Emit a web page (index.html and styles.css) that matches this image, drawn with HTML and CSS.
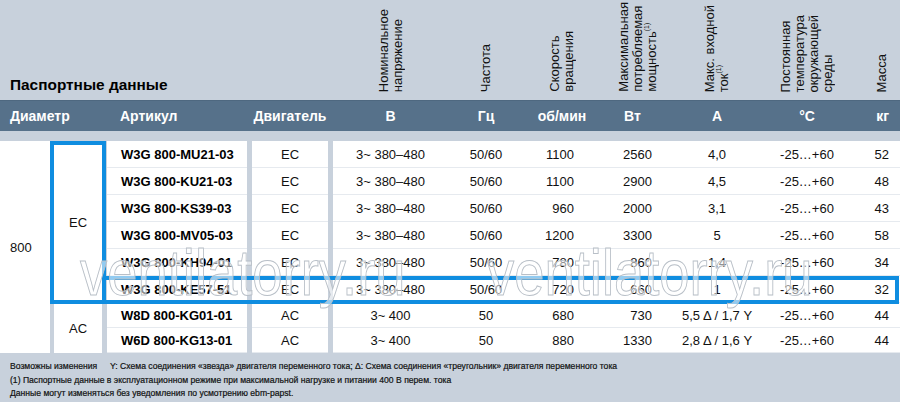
FILE: index.html
```html
<!DOCTYPE html>
<html lang="ru">
<head>
<meta charset="utf-8">
<title>Паспортные данные</title>
<link rel="stylesheet" href="styles.css">
</head>
<body>
<div class="sheet">
  <div class="grid top">
    <div class="title">Паспортные данные</div>
    <div class="vh c9">Номинальное<br>напряжение</div>
    <div class="vh c10">Частота</div>
    <div class="vh c11">Скорость<br>вращения</div>
    <div class="vh c12">Максимальная<br>потребляемая<br>мощность<sup>(1)</sup></div>
    <div class="vh c13">Макс. входной<br>ток<sup>(1)</sup></div>
    <div class="vh c14">Постоянная<br>температура<br>окружающей<br>среды</div>
    <div class="vh c15 mass">Масса</div>
  </div>

  <div class="grid band">
    <div class="b-dia">Диаметр</div>
    <div class="b-art">Артикул</div>
    <div class="bc c7">Двигатель</div>
    <div class="bc c9">В</div>
    <div class="bc c10">Гц</div>
    <div class="bc c11">об/мин</div>
    <div class="bc c12 b-w">Вт</div>
    <div class="bc c13">А</div>
    <div class="bc c14">°С</div>
    <div class="bc c15 b-kg">кг</div>
  </div>

  <div class="grid body">
    <div class="dia">800</div>
    <div class="sep s2"></div>
    <div class="sep s4"></div>
    <div class="sep s6"></div>
    <div class="sep s8"></div>
    <div class="type ec">EC</div>
    <div class="type ac">AC</div>

    <div class="cell art">W3G 800-MU21-03</div><div class="cell c">EC</div><div class="cell c">3~ 380–480</div><div class="cell c">50/60</div><div class="cell r-rpm">1100</div><div class="cell r-w">2560</div><div class="cell c">4,0</div><div class="cell c">-25…+60</div><div class="cell r-kg">52</div>
    <div class="cell art">W3G 800-KU21-03</div><div class="cell c">EC</div><div class="cell c">3~ 380–480</div><div class="cell c">50/60</div><div class="cell r-rpm">1100</div><div class="cell r-w">2900</div><div class="cell c">4,5</div><div class="cell c">-25…+60</div><div class="cell r-kg">48</div>
    <div class="cell art">W3G 800-KS39-03</div><div class="cell c">EC</div><div class="cell c">3~ 380–480</div><div class="cell c">50/60</div><div class="cell r-rpm">960</div><div class="cell r-w">2000</div><div class="cell c">3,1</div><div class="cell c">-25…+60</div><div class="cell r-kg">43</div>
    <div class="cell art">W3G 800-MV05-03</div><div class="cell c">EC</div><div class="cell c">3~ 380–480</div><div class="cell c">50/60</div><div class="cell r-rpm">1200</div><div class="cell r-w">3300</div><div class="cell c">5</div><div class="cell c">-25…+60</div><div class="cell r-kg">58</div>
    <div class="cell art">W3G 800-KH94-01</div><div class="cell c">EC</div><div class="cell c">3~ 380–480</div><div class="cell c">50/60</div><div class="cell r-rpm">780</div><div class="cell r-w">860</div><div class="cell c">1,4</div><div class="cell c">-25…+60</div><div class="cell r-kg">34</div>
    <div class="cell art">W3G 800-KE57-51</div><div class="cell c">EC</div><div class="cell c">3~ 380–480</div><div class="cell c">50/60</div><div class="cell r-rpm">720</div><div class="cell r-w">660</div><div class="cell c">1</div><div class="cell c">-25…+60</div><div class="cell r-kg">32</div>
    <div class="cell art">W8D 800-KG01-01</div><div class="cell c">AC</div><div class="cell c">3~ 400</div><div class="cell c">50</div><div class="cell r-rpm">680</div><div class="cell r-w">730</div><div class="cell c">5,5 Δ / 1,7 Y</div><div class="cell c">-25…+60</div><div class="cell r-kg">44</div>
    <div class="cell art">W6D 800-KG13-01</div><div class="cell c">AC</div><div class="cell c">3~ 400</div><div class="cell c">50</div><div class="cell r-rpm">880</div><div class="cell r-w">1330</div><div class="cell c">2,8 Δ / 1,6 Y</div><div class="cell c">-25…+60</div><div class="cell r-kg">44</div>

    <div class="frame frame-ec"></div>
    <div class="frame frame-row"></div>
    <div class="wm wm1">ventilatorry.ru</div>
    <div class="wm wm2">ventilatorry.ru</div>
  </div>

  <div class="notes">
    <div><span class="note-lead">Возможны изменения</span>Y: Схема соединения «звезда» двигателя переменного тока; Δ: Схема соединения «треугольник» двигателя переменного тока</div>
    <div>(1) Паспортные данные в эксплуатационном режиме при максимальной нагрузке и питании 400 В перем. тока</div>
    <div>Данные могут изменяться без уведомления по усмотрению ebm-papst.</div>
  </div>
</div>
</body>
</html>
```

FILE: styles.css
```css
* {
  box-sizing: border-box;
}

html,
body {
  margin: 0;
  padding: 0;
}

body {
  background: #c8d1dc;
  font-family: "Liberation Sans", Arial, sans-serif;
  color: #111;
}

.sheet {
  width: 900px;
  height: 402px;
  overflow: hidden;
}

.grid {
  display: grid;
  grid-template-columns: 50px 4px 48px 5px 140px 5px 76px 5px 115px 76px 76px 76px 82px 98px 44px;
}

.c7 { grid-column: 7; }
.c9 { grid-column: 9; }
.c10 { grid-column: 10; }
.c11 { grid-column: 11; }
.c12 { grid-column: 12; }
.c13 { grid-column: 13; }
.c14 { grid-column: 14; }
.c15 { grid-column: 15; }

/* ---------- top area ---------- */
.top {
  height: 100px;
  padding-bottom: 8px;
}

.title {
  grid-column: 1 / 9;
  grid-row: 1;
  align-self: end;
  padding-left: 10px;
  font-weight: 700;
  font-size: 15.4px;
  line-height: 15px;
  color: #000;
}

.vh {
  grid-row: 1;
  align-self: end;
  justify-self: center;
  writing-mode: vertical-rl;
  transform: rotate(180deg);
  font-size: 13px;
  line-height: 14px;
  color: #111;
  white-space: nowrap;
}

.vh sup {
  font-size: 7px;
  line-height: 0;
  vertical-align: 5px;
}

.vh.mass {
  justify-self: end;
  margin-right: 11px;
}

/* ---------- header band ---------- */
.band {
  height: 31px;
  background: #56718a;
  border-top: 1px solid #4e6880;
  color: #fff;
  font-weight: 700;
  font-size: 14px;
  align-items: center;
  margin-bottom: 10px;
}

.b-dia {
  grid-column: 1 / 5;
  grid-row: 1;
  padding-left: 10px;
}

.b-art {
  grid-column: 5;
  grid-row: 1;
  padding-left: 13px;
}

.bc {
  grid-row: 1;
  text-align: center;
}

.b-w {
  padding-right: 11px;
}

.b-kg {
  text-align: right;
  padding-right: 11px;
}

/* ---------- table body ---------- */
.body {
  position: relative;
  background: #fff;
  grid-template-rows: repeat(6, 27px) repeat(2, 25px);
  font-size: 13px;
}

.dia {
  grid-column: 1;
  grid-row: 1 / -1;
  display: flex;
  align-items: center;
  padding-left: 10px;
  font-size: 13px;
}

.sep {
  grid-row: 1 / -1;
  background: #c8d1dc;
}

.s2 { grid-column: 2; }
.s4 { grid-column: 4; }
.s6 { grid-column: 6; }
.s8 { grid-column: 8; }

.type {
  grid-column: 3;
  display: flex;
  align-items: center;
  justify-content: center;
}

.type.ec { grid-row: 1 / 7; }
.type.ac { grid-row: 7 / 9; }

.cell {
  display: flex;
  align-items: center;
  white-space: nowrap;
  box-shadow: inset 0 -1px 0 #e6eaef;
}

.cell.art {
  font-weight: 700;
  padding-left: 14px;
  color: #000;
}

.cell.c {
  justify-content: center;
}

.cell.r-rpm {
  justify-content: flex-end;
  padding-right: 26px;
}

.cell.r-w {
  justify-content: flex-end;
  padding-right: 24px;
}

.cell.r-kg {
  justify-content: flex-end;
  padding-right: 11px;
}

/* blue highlight frames (overlays) */
.frame {
  position: absolute;
  inset: 0;
  border: 4px solid #0f8de0;
  pointer-events: none;
}

.frame-ec {
  grid-column: 2 / 5;
  grid-row: 1 / 7;
  right: 1px;
  bottom: -1px;
}

.frame-row {
  grid-column: 4 / 16;
  grid-row: 6 / 7;
  bottom: -1px;
  right: 1px;
}

/* watermark overlay */
.wm {
  position: absolute;
  top: 100px;
  font-size: 64px;
  line-height: 1;
  color: rgba(255, 255, 255, 0.55);
  -webkit-text-stroke: 1px #b8bfc7;
  white-space: nowrap;
  pointer-events: none;
  transform: scaleX(0.85);
  transform-origin: left center;
}

.wm1 { left: 80px; }
.wm2 { left: 487px; }

/* ---------- notes ---------- */
.notes {
  padding: 7px 10px 0;
  font-size: 8.6px;
  line-height: 13.5px;
  color: #111;
  -webkit-text-stroke: 0.2px #111;
}

.note-lead {
  display: inline-block;
  width: 100px;
}
```
